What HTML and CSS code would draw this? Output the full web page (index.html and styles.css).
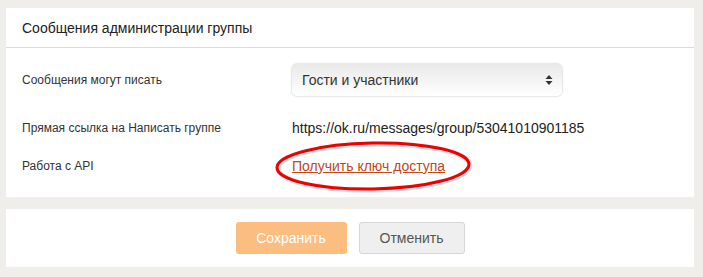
FILE: index.html
```html
<!DOCTYPE html>
<html lang="ru">
<head>
    <meta charset="UTF-8">
    <title>Сообщения администрации группы</title>
    <link rel="stylesheet" href="styles.css">
</head>
<body>
<div class="page">
    <section class="card">
        <div class="card-header">Сообщения администрации группы</div>
        <div class="card-body">
            <div class="row">
                <div class="label">Сообщения могут писать</div>
                <div class="value">
                    <div class="select">
                        <span>Гости и участники</span>
                        <svg class="arrows" width="8" height="12" viewBox="0 0 8 12">
                            <path d="M4 1 L7.5 5 H0.5 Z" fill="#333"/>
                            <path d="M4 11 L7.5 7 H0.5 Z" fill="#333"/>
                        </svg>
                    </div>
                </div>
            </div>
            <div class="row">
                <div class="label">Прямая ссылка на Написать группе</div>
                <div class="value url">https://ok.ru/messages/group/53041010901185</div>
            </div>
            <div class="row">
                <div class="label">Работа с API</div>
                <div class="value">
                    <span class="mark">
                        <a href="#" class="link">Получить ключ доступа</a>
                        <svg class="circle" width="210" height="56" viewBox="0 0 210 56">
                            <ellipse cx="105" cy="28" rx="96" ry="23" fill="none" stroke="rgba(0,0,0,0.12)" stroke-width="5" transform="rotate(-1 105 28)"/>
                            <ellipse cx="104" cy="27" rx="96" ry="23" fill="none" stroke="#ee0000" stroke-width="3" transform="rotate(-1 104 27)"/>
                        </svg>
                    </span>
                </div>
            </div>
        </div>
    </section>

    <section class="card actions">
        <button class="button primary" disabled>Сохранить</button>
        <button class="button secondary">Отменить</button>
    </section>
</div>
</body>
</html>
```

FILE: styles.css
```css
:root {
    --bg: #efeeea;
    --text: #333333;
    --border: #dcdcdc;
    --link: #c5451a;
}

body, html {
    margin: 0;
    padding: 0;
    background-color: var(--bg);
    font-family: 'Liberation Sans', Arial, sans-serif;
    color: var(--text);
}

.page {
    padding: 8px 9px 10px 6px;
    display: flex;
    flex-direction: column;
    gap: 12px;
}

.card {
    background: white;
}

.card-header {
    height: 39px;
    padding: 0 16px;
    display: flex;
    align-items: center;
    font-size: 14px;
    color: #222;
    border-bottom: 1px solid var(--border);
}

.card-body {
    padding: 15px 16px 12px;
    display: flex;
    flex-direction: column;
}

.row {
    display: flex;
    align-items: center;
    height: 38px;
}

.row:first-child {
    height: 34px;
    margin-bottom: 12px;
}

.label {
    width: 270px;
    font-size: 12px;
    color: #333;
}

.value {
    font-size: 14px;
}

.select {
    width: 270px;
    height: 32px;
    box-sizing: border-box;
    padding: 0 9px 0 10px;
    border-radius: 5px;
    background: linear-gradient(#e9e9e9, #ffffff);
    box-shadow: 0 0 2px rgba(0, 0, 0, 0.35);
    display: flex;
    align-items: center;
    justify-content: space-between;
    font-size: 14px;
    color: #333;
}

.url {
    color: #222;
}

.mark {
    position: relative;
    display: inline-block;
}

.link {
    color: var(--link);
    text-decoration: underline;
    font-size: 14px;
}

.circle {
    position: absolute;
    left: -23px;
    top: -19px;
}

.actions {
    height: 58px;
    display: flex;
    justify-content: center;
    align-items: center;
    gap: 12px;
}

.button {
    height: 32px;
    padding: 0 20px;
    border-radius: 3px;
    font-family: inherit;
    font-size: 14px;
}

.button.primary {
    width: 111px;
    background-color: #fcbd80;
    color: white;
    border: none;
}

.button.secondary {
    width: 106px;
    background-color: #efefef;
    color: #555;
    border: 1px solid #d6d6d6;
}
```
